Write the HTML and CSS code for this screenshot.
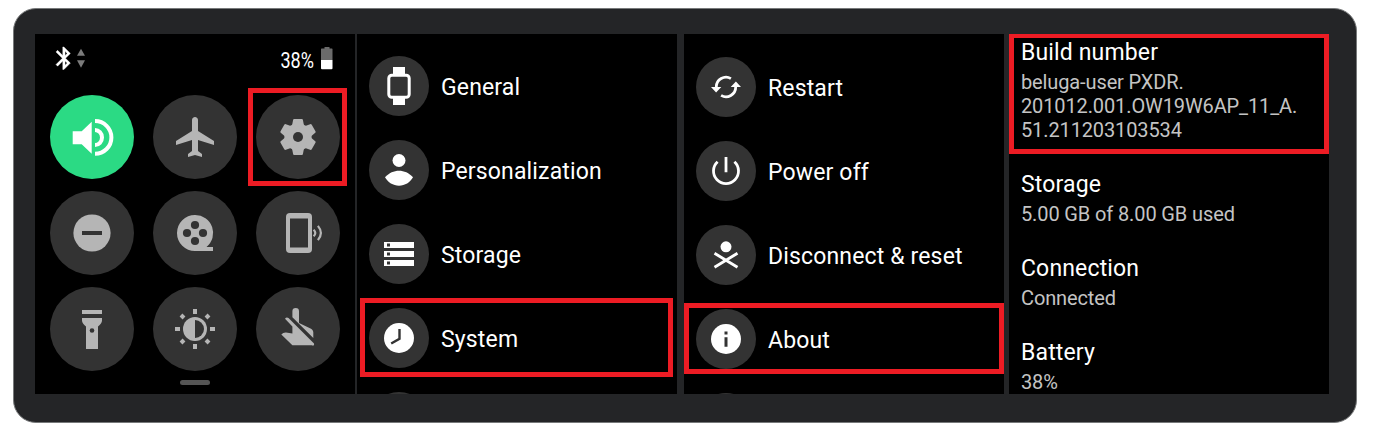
FILE: index.html
```html
<!DOCTYPE html>
<html lang="en">
<head>
<meta charset="utf-8">
<title>Watch settings</title>
<link rel="stylesheet" href="styles.css">
</head>
<body>
<main class="frame">
  <section class="panel quick">
    <header class="status">
      <svg class="bt" width="32" height="24" viewBox="0 0 32 24">
        <path fill="#fff" stroke="#fff" stroke-width=".35" transform="translate(-4.65 -1.3) scale(1.13)" d="M17.71 7.71L12 2h-1v7.59L6.41 5 5 6.41 10.59 12 5 17.59 6.41 19 11 14.41V22h1l5.71-5.71-4.3-4.29 4.3-4.29zM13 5.83l1.88 1.88L13 9.59V5.83zm1.88 10.46L13 18.17v-3.76l1.88 1.88z"/>
        <path fill="#7b7b7b" d="M22 9.800l4-7 4 7zM22 14.300h8l-4 7.500z"/>
      </svg>
      <span class="percent">38%</span>
      <svg class="battery" width="12" height="24" viewBox="0 0 12 24">
        <path fill="#6b6b6b" d="M3.500 1H8.500V2.500H11L11.500 3V14H0V3L.5 2.500H3.500z"/>
        <path fill="#fff" d="M0 14h11.500v8.200q0 1-1 1h-9.500q-1 0-1-1z"/>
      </svg>
    </header>
    <div class="tiles">
      <div class="tile on"><svg viewBox="0 0 84 84">
        <path d="M22.700 36.300h9l10-9.500v32l-10-9.500h-9z"/>
        <path class="line-w4" d="M45 26a16.400 16.400 0 0 1 0 32.800M45 35a7 7.500 0 0 1 0 15"/>
      </svg></div>
      <div class="tile"><svg viewBox="0 0 84 84">
        <path transform="translate(19 18) scale(2)" d="M21 16v-2l-8-5V3.500c0-.83-.67-1.500-1.500-1.500S10 2.670 10 3.500V9l-8 5v2l8-2.500V19l-2 1.500V22l3.500-1 3.500 1v-1.500L13 19v-5.500l8 2.500z"/>
      </svg></div>
      <div class="tile"><svg viewBox="0 0 84 84">
        <g transform="translate(42 42)">
          <circle r="13.600"/>
          <path id="tooth" d="M-4 -18H4L4.800 -17.500L5.800 -12.500L9 -5H-9L-5.800 -12.500L-4.800 -17.500z"/>
          <use href="#tooth" transform="rotate(60)"/><use href="#tooth" transform="rotate(120)"/><use href="#tooth" transform="rotate(180)"/><use href="#tooth" transform="rotate(240)"/><use href="#tooth" transform="rotate(300)"/>
          <circle class="hole" r="5"/>
        </g>
      </svg><i class="mark mark-settings"></i></div>
      <div class="tile"><svg viewBox="0 0 84 84">
        <circle cx="42" cy="42" r="18.600"/><path class="hole" d="M32 40h20v4H32z"/>
      </svg></div>
      <div class="tile"><svg viewBox="0 0 84 84">
        <path d="M42 24a18 18 0 1 0 0 36h18v-4h-6.500A18 18 0 0 0 42 24z"/>
        <g class="hole"><circle cx="42" cy="34" r="4.100"/><circle cx="42" cy="50" r="4.100"/><circle cx="34" cy="42" r="4.100"/><circle cx="50" cy="42" r="4.100"/></g>
      </svg></div>
      <div class="tile"><svg viewBox="0 0 84 84">
        <rect x="30" y="22" width="26" height="40" rx="4"/><path class="hole" d="M34 27.500h18v29H34z"/>
        <path class="line-w2" d="M57.600 38.800q3.400 3.200 0 6.400M61.900 34.900q6 7.100 0 14.200"/>
      </svg></div>
      <div class="tile"><svg viewBox="0 0 84 84">
        <path d="M32 23h20v4H32zM32 31h20v2.500c0 2-1.500 4-4 6V62H36V39.500c-2.500-2-4-4-4-6z"/><circle class="hole" cx="42" cy="43.500" r="2.300"/>
      </svg></div>
      <div class="tile"><svg viewBox="0 0 84 84">
        <circle cx="42" cy="42" r="12"/><path class="hole" d="M42 33a9 9 0 0 1 0 18z"/>
        <path class="line-w4" d="M42 22v5M42 57v5M22 42h5M57 42h5M28 28l3 3M53 53l3 3M56 28l-3 3M31 53l-3 3"/>
      </svg></div>
      <div class="tile"><svg viewBox="0 0 84 84">
        <path d="M36.400 24.300a3.300 3.300 0 0 1 6.600 0V36L54 41.200q3.300 1.500 3.300 4.200V51L36.400 30.300z"/>
        <path d="M29 31.700q1.600-2.200 3.500-.7L58 56.500q.6 1.500-.8 2.200l-1.400-.4H36.400L25.300 47.500q2-2.300 4.700-2.100l6.400 1.100v-7z"/>
      </svg></div>
    </div>
    <div class="handle"></div>
  </section>

  <section class="panel menu">
    <div class="row"><svg class="icon" viewBox="0 0 60 60">
      <path d="M24 11h12v8H24zM24 41h12v8H24z"/><rect class="outline" x="19.800" y="19.200" width="20.400" height="22" rx="3"/>
    </svg><span>General</span></div>
    <div class="row"><svg class="icon" viewBox="0 0 60 60">
      <circle cx="30" cy="20.500" r="6.500"/><path d="M16 37.300C20 32.700 25 30.700 30 30.700S40 32.700 44 37.300C41 42.500 36 45.700 30 45.700S19 42.500 16 37.300z"/>
    </svg><span>Personalization</span></div>
    <div class="row"><svg class="icon" viewBox="0 0 60 60">
      <path d="M15 18h30v6H15zM15 27h30v6H15zM15 36h30v6H15z"/><path class="hole" d="M18 19.500h3v3h-3zM18 28.500h3v3h-3zM18 37.500h3v3h-3z"/>
    </svg><span>Storage</span></div>
    <div class="row"><svg class="icon" viewBox="0 0 60 60">
      <circle cx="30" cy="30" r="15"/><path class="hands" d="M30.500 21v9.700l-8.300 4.800"/>
    </svg><span>System</span><i class="mark mark-system"></i></div>
    <div class="row"><svg class="icon" viewBox="0 0 60 60"></svg></div>
  </section>

  <section class="panel menu menu-system">
    <div class="row"><svg class="icon" viewBox="0 0 60 60">
      <path class="arc" d="M34.900 21.600A9.700 9.700 0 0 0 20.300 30M25.100 38.400A9.700 9.700 0 0 0 39.700 30"/><path d="M15 30h10.300l-5.200 5.400zM34.700 30H45l-5.100-5.400z"/>
    </svg><span>Restart</span></div>
    <div class="row"><svg class="icon" viewBox="0 0 60 60">
      <path class="arc" d="M21.600 20.800A12.500 12.500 0 1 0 38.400 20.800M30 16v15.300"/>
    </svg><span>Power off</span></div>
    <div class="row"><svg class="icon" viewBox="0 0 60 60">
      <circle cx="30" cy="21.800" r="5.500"/><path class="arc" d="M18.500 28.200l23 14M41.500 28.200l-23 14"/>
    </svg><span>Disconnect &amp; reset</span></div>
    <div class="row"><svg class="icon" viewBox="0 0 60 60">
      <circle cx="30" cy="30" r="15"/><path class="hole" d="M28.500 22.500h3v3h-3zM28.500 28.300h3v9.500h-3z"/>
    </svg><span>About</span><i class="mark mark-about"></i></div>
    <div class="row"><svg class="icon" viewBox="0 0 60 60"></svg></div>
  </section>

  <section class="panel details">
    <div class="item"><h2>Build number</h2><p>beluga-user PXDR.<br>201012.001.OW19W6AP_11_A.<br>51.211203103534</p></div>
    <div class="item"><h2>Storage</h2><p>5.00 GB of 8.00 GB used</p></div>
    <div class="item"><h2>Connection</h2><p>Connected</p></div>
    <div class="item"><h2>Battery</h2><p>38%</p></div>
    <i class="mark mark-build"></i>
  </section>
</main>
</body>
</html>
```
FILE: styles.css
```css
* { box-sizing: border-box; }
body {
  margin: 0;
  padding: 8px 0 0 13px;
  height: 426px;
  overflow: hidden;
  background: #fff;
  font-family: Roboto, "Liberation Sans", sans-serif;
  color: #fff;
}
.frame {
  width: 1344px;
  height: 415px;
  padding: 25px 21px;
  border: 1px solid #77797a;
  border-radius: 23px;
  background: #242527;
  display: flex;
}
.panel {
  position: relative;
  flex: none;
  width: 320px;
  height: 360px;
  background: #000;
  overflow: hidden;
}
.mark {
  position: absolute;
  border: 5px solid #ed1c24;
}

/* quick settings */
.quick { margin-right: 2px; }
.status {
  height: 61px;
  padding: 12px 22px 0 20px;
  display: flex;
  align-items: flex-start;
}
.bt { margin-right: auto; }
.percent {
  font-size: 21.5px;
  line-height: 24px;
  margin: 3px 7px 0 0;
  transform: scaleX(.84);
  transform-origin: right;
}
.tiles {
  display: grid;
  grid-template-columns: repeat(3, 84px);
  gap: 12px 19px;
  padding-left: 15px;
}
.tile {
  position: relative;
  height: 84px;
  border-radius: 50%;
  background: #333;
  fill: #b5b5b5;
  stroke: none;
}
.tile svg { display: block; width: 84px; height: 84px; }
.tile.on { background: #2bda84; fill: #fff; }
.line-w4, .line-w2 { fill: none; stroke: #b5b5b5; stroke-width: 4; }
.line-w2 { stroke-width: 2.2; }
.on .line-w4 { stroke: #fff; }
.hole { fill: #333; }
.handle {
  width: 30px;
  height: 5px;
  margin: 9px auto 0;
  border-radius: 3px;
  background: #555;
}
.mark-settings { left: -8px; top: -7px; width: 99px; height: 98px; }

/* menus */
.menu { padding: 22px 12px 0; margin-right: 7px; }
.menu-system { padding-top: 23px; margin-right: 5px; }
.row {
  position: relative;
  height: 60px;
  margin-bottom: 24px;
  display: flex;
  align-items: center;
  gap: 12px;
  font-size: 23px;
  line-height: 28px;
  letter-spacing: .15px;
  white-space: nowrap;
}
.row span { padding-top: 4px; }
.icon {
  flex: none;
  width: 60px;
  height: 60px;
  border-radius: 50%;
  background: #333;
  fill: #fff;
}
.outline, .arc { fill: none; stroke: #fff; stroke-width: 3; }
.arc { stroke-width: 2.8; }
.hands { fill: none; stroke: #333; stroke-width: 2.4; }
.mark-system { left: -9px; top: -10px; width: 313px; height: 79px; }
.mark-about { left: -12px; top: -6px; width: 320px; height: 71px; }

/* details */
.details { padding: 5px 12px 0; }
.item { margin-bottom: 29px; }
.item h2 {
  margin: 0 0 3px;
  font-size: 23px;
  font-weight: 400;
  line-height: 28px;
  letter-spacing: .15px;
}
.item p {
  margin: 0;
  font-size: 20px;
  line-height: 24px;
  letter-spacing: -.12px;
  color: #c4c4c4;
  white-space: nowrap;
}
.mark-build { inset: 0 0 auto 0; height: 120px; border-top-width: 4px; }
```
